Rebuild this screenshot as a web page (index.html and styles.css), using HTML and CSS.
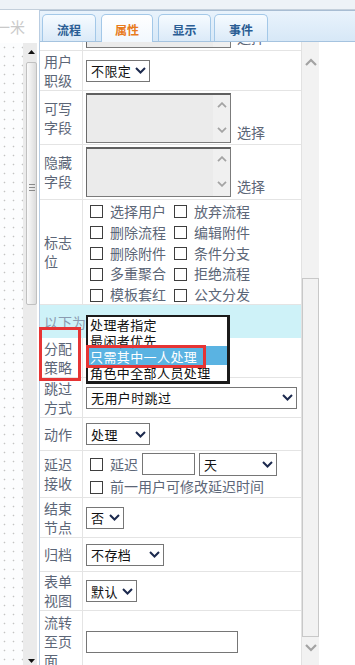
FILE: index.html
```html
<!DOCTYPE html>
<html lang="zh-CN">
<head>
<meta charset="utf-8">
<title>属性</title>
<link rel="stylesheet" href="styles.css">
</head>
<body>
<div class="topstrip"></div>
<div class="main">
  <aside class="leftpane">
    <div class="lp-head"><span class="lp-title">一米</span></div>
    <div class="lp-body">
      <div class="canvas"></div>
      <div class="lscroll">
        <div class="lbtn"><svg width="7" height="4" viewBox="0 0 7 4"><path d="M0 4L3.5 0L7 4Z" fill="#111"/></svg></div>
        <div class="ltrack"><div class="lthumb"><span class="grip"></span></div></div>
        <div class="lbtn lbtn-down"><svg width="7" height="4" viewBox="0 0 7 4"><path d="M0 0L3.5 4L7 0Z" fill="#111"/></svg></div>
      </div>
    </div>
  </aside>

  <section class="panel">
    <nav class="tabs">
      <span class="tab t1">流程</span>
      <span class="tab t2 active">属性</span>
      <span class="tab t3">显示</span>
      <span class="tab t4">事件</span>
    </nav>

    <div class="pbody">
      <div class="viewport">
        <div class="form">

          <div class="row h55 first">
            <div class="lbl">可选用户</div>
            <div class="val">
              <div class="tafield">
                <div class="ta"><div class="ta-bar">
                  <svg width="10" height="6" viewBox="0 0 10 6"><path d="M1 5.2L5 1.2L9 5.2" fill="none" stroke="#a4a4a4" stroke-width="1.8"/></svg>
                  <svg width="10" height="6" viewBox="0 0 10 6"><path d="M1 0.8L5 4.8L9 0.8" fill="none" stroke="#a4a4a4" stroke-width="1.8"/></svg>
                </div></div>
                <span class="pick">选择</span>
              </div>
            </div>
          </div>

          <div class="row h40">
            <div class="lbl">用户职级</div>
            <div class="val">
              <div class="sel w64"><span>不限定</span><svg class="chev" width="11" height="7" viewBox="0 0 11 7"><path d="M1 1L5.5 5.5L10 1" fill="none" stroke="#1c2a4e" stroke-width="2"/></svg></div>
            </div>
          </div>

          <div class="row h54">
            <div class="lbl">可写字段</div>
            <div class="val">
              <div class="tafield">
                <div class="ta"><div class="ta-bar">
                  <svg width="10" height="6" viewBox="0 0 10 6"><path d="M1 5.2L5 1.2L9 5.2" fill="none" stroke="#a4a4a4" stroke-width="1.8"/></svg>
                  <svg width="10" height="6" viewBox="0 0 10 6"><path d="M1 0.8L5 4.8L9 0.8" fill="none" stroke="#a4a4a4" stroke-width="1.8"/></svg>
                </div></div>
                <span class="pick">选择</span>
              </div>
            </div>
          </div>

          <div class="row h55">
            <div class="lbl">隐藏字段</div>
            <div class="val">
              <div class="tafield">
                <div class="ta"><div class="ta-bar">
                  <svg width="10" height="6" viewBox="0 0 10 6"><path d="M1 5.2L5 1.2L9 5.2" fill="none" stroke="#a4a4a4" stroke-width="1.8"/></svg>
                  <svg width="10" height="6" viewBox="0 0 10 6"><path d="M1 0.8L5 4.8L9 0.8" fill="none" stroke="#a4a4a4" stroke-width="1.8"/></svg>
                </div></div>
                <span class="pick">选择</span>
              </div>
            </div>
          </div>

          <div class="row h105">
            <div class="lbl">标志位</div>
            <div class="val">
              <div class="flags">
                <span class="cbi"><span class="cb"></span>选择用户</span>
                <span class="cbi"><span class="cb"></span>放弃流程</span>
                <span class="cbi"><span class="cb"></span>删除流程</span>
                <span class="cbi"><span class="cb"></span>编辑附件</span>
                <span class="cbi"><span class="cb"></span>删除附件</span>
                <span class="cbi"><span class="cb"></span>条件分支</span>
                <span class="cbi"><span class="cb"></span>多重聚合</span>
                <span class="cbi"><span class="cb"></span>拒绝流程</span>
                <span class="cbi"><span class="cb"></span>模板套红</span>
                <span class="cbi"><span class="cb"></span>公文分发</span>
              </div>
            </div>
          </div>

          <div class="section">以下为流转策略设置</div>

          <div class="row h40">
            <div class="lbl">分配策略</div>
            <div class="val"></div>
          </div>

          <div class="row h40">
            <div class="lbl">跳过方式</div>
            <div class="val">
              <div class="sel w211"><span>无用户时跳过</span><svg class="chev" width="11" height="7" viewBox="0 0 11 7"><path d="M1 1L5.5 5.5L10 1" fill="none" stroke="#1c2a4e" stroke-width="2"/></svg></div>
            </div>
          </div>

          <div class="row h33">
            <div class="lbl">动作</div>
            <div class="val">
              <div class="sel w64"><span>处理</span><svg class="chev" width="11" height="7" viewBox="0 0 11 7"><path d="M1 1L5.5 5.5L10 1" fill="none" stroke="#1c2a4e" stroke-width="2"/></svg></div>
            </div>
          </div>

          <div class="row h47">
            <div class="lbl">延迟接收</div>
            <div class="val stack">
              <div class="line1">
                <span class="cbi"><span class="cb"></span>延迟</span>
                <span class="inp w53"></span>
                <div class="sel w78 tall"><span>天</span><svg class="chev" width="11" height="7" viewBox="0 0 11 7"><path d="M1 1L5.5 5.5L10 1" fill="none" stroke="#1c2a4e" stroke-width="2"/></svg></div>
              </div>
              <div class="line2">
                <span class="cbi"><span class="cb"></span>前一用户可修改延迟时间</span>
              </div>
            </div>
          </div>

          <div class="row h40">
            <div class="lbl">结束节点</div>
            <div class="val">
              <div class="sel w38"><span>否</span><svg class="chev" width="11" height="7" viewBox="0 0 11 7"><path d="M1 1L5.5 5.5L10 1" fill="none" stroke="#1c2a4e" stroke-width="2"/></svg></div>
            </div>
          </div>

          <div class="row h34">
            <div class="lbl">归档</div>
            <div class="val">
              <div class="sel w78"><span>不存档</span><svg class="chev" width="11" height="7" viewBox="0 0 11 7"><path d="M1 1L5.5 5.5L10 1" fill="none" stroke="#1c2a4e" stroke-width="2"/></svg></div>
            </div>
          </div>

          <div class="row h39">
            <div class="lbl">表单视图</div>
            <div class="val">
              <div class="sel w51"><span>默认</span><svg class="chev" width="11" height="7" viewBox="0 0 11 7"><path d="M1 1L5.5 5.5L10 1" fill="none" stroke="#1c2a4e" stroke-width="2"/></svg></div>
            </div>
          </div>

          <div class="row h62">
            <div class="lbl">流转至页面</div>
            <div class="val">
              <span class="inp w152"></span>
            </div>
          </div>

        </div>
      </div>

      <div class="rscroll">
        <div class="rs-up"><svg width="12" height="8" viewBox="0 0 12 8"><path d="M1 7L6 2L11 7" fill="none" stroke="#a3a3a3" stroke-width="2.2"/></svg></div>
        <div class="rs-track"><div class="rs-thumb"></div></div>
        <div class="rs-down"><svg width="12" height="8" viewBox="0 0 12 8"><path d="M1 1L6 6L11 1" fill="none" stroke="#a3a3a3" stroke-width="2.2"/></svg></div>
      </div>
    </div>

    <div class="listbox">
      <div class="opt">处理者指定</div>
      <div class="opt">最闲者优先</div>
      <div class="opt on">只需其中一人处理</div>
      <div class="opt">角色中全部人员处理</div>
    </div>
    <div class="mark mark-label"></div>
    <div class="mark mark-item"></div>
  </section>
</div>
</body>
</html>
```

FILE: styles.css
```css
* { box-sizing: border-box; }
html, body { margin: 0; padding: 0; }
body {
  width: 355px;
  height: 665px;
  overflow: hidden;
  background: #fff;
  font-family: "Noto Sans CJK SC", "Noto Sans", sans-serif;
}

.topstrip {
  height: 10px;
  background: #eef2f7;
  border-bottom: 1px solid #c4cfdb;
}

.main {
  display: flex;
  height: 655px;
}

/* ---------- left pane ---------- */
.leftpane {
  width: 39px;
  flex: none;
  display: flex;
  flex-direction: column;
}
.lp-head {
  height: 33px;
  display: flex;
  justify-content: flex-end;
  align-items: center;
  padding-right: 14px;
  overflow: hidden;
  font-size: 15px;
  line-height: 1;
  color: #c9c9c9;
  white-space: nowrap;
}
.lp-title { flex: none; }
.lp-body {
  flex: 1;
  display: flex;
  padding-right: 2px;
}
.canvas {
  width: 23px;
  background-color: #fcfdfe;
  background-image: radial-gradient(circle, #c3c3c3 0.7px, transparent 1.1px);
  background-size: 9px 9px;
  background-position: 0 0;
}
.lscroll {
  width: 14px;
  display: flex;
  flex-direction: column;
  background: #ebebeb;
}
.lbtn {
  height: 17px;
  display: flex;
  align-items: center;
  justify-content: center;
  padding-left: 2px;
}
.lbtn-down { align-items: flex-end; padding-bottom: 2px; }
.ltrack {
  flex: 1;
  padding: 2px 0 0 3px;
}
.lthumb {
  height: 243px;
  border: 1px solid #c0c0c0;
  border-radius: 2px;
  background: linear-gradient(90deg, #fbfbfb, #dcdcdc);
  display: flex;
  align-items: center;
  justify-content: center;
}
.grip {
  width: 6px;
  height: 7px;
  margin-top: 8px;
  background: repeating-linear-gradient(#8a8a8a 0 1px, transparent 1px 3px);
}

/* ---------- panel ---------- */
.panel {
  flex: 1;
  position: relative;
  display: flex;
  flex-direction: column;
  border-left: 1px solid #b9cde2;
  min-width: 0;
}
.tabs {
  height: 32px;
  flex: none;
  display: flex;
  align-items: flex-end;
  gap: 5px;
  padding-left: 2px;
  border-top: 1px solid #a8bdd3;
  border-bottom: 1px solid #a5c3df;
  background: linear-gradient(#e9f3fc, #d7e8f7);
}
.tab {
  height: 27px;
  display: flex;
  align-items: center;
  justify-content: center;
  padding-top: 2px;
  border: 1px solid #a3c8e8;
  border-bottom: 0;
  border-radius: 5px 5px 0 0;
  background: linear-gradient(#f6fbff, #dbeaf8);
  font-size: 12px;
  font-weight: bold;
  color: #2a5d94;
}
.t1 { width: 54px; }
.t2 { width: 52px; }
.t3 { width: 53px; }
.t4 { width: 54px; margin-left: -2px; }
.tab.active {
  height: 28px;
  margin-bottom: -1px;
  background: linear-gradient(#ffffff, #f2f8fe);
  color: #e87b1c;
}

.pbody {
  flex: 1;
  display: flex;
  min-height: 0;
}
.viewport {
  width: 262px;
  flex: none;
  overflow: hidden;
  border-right: 1px solid #e2e2e2;
}

/* ---------- rows ---------- */
.row {
  display: flex;
  border-bottom: 1px solid #e4e4e4;
}
.first { margin-top: -46px; }
.h33 { height: 33px; }
.h34 { height: 34px; }
.h39 { height: 39px; }
.h40 { height: 40px; }
.h47 { height: 47px; }
.h54 { height: 54px; }
.h55 { height: 55px; }
.h62 { height: 62px; }
.h105 { height: 105px; }

.lbl {
  width: 43px;
  flex: none;
  display: flex;
  align-items: center;
  padding-left: 4px;
  border-right: 1px solid #e4e4e4;
  font-size: 14px;
  line-height: 19px;
  color: #5c6677;
}
.val {
  flex: 1;
  min-width: 0;
  display: flex;
  align-items: center;
  padding-left: 3px;
}

.section {
  height: 33px;
  display: flex;
  align-items: center;
  padding-left: 4px;
  background: #cef2f8;
  font-size: 14px;
  color: #8b9bb0;
  white-space: nowrap;
}

/* select */
.sel {
  height: 22px;
  display: inline-flex;
  align-items: center;
  justify-content: space-between;
  padding: 0 3px 0 4px;
  border: 1px solid #767676;
  background: #fff;
  font-size: 13px;
  letter-spacing: 0.4px;
  color: #111;
  line-height: 1;
  flex: none;
}
.sel.tall { height: 23px; }
.chev { flex: none; }
.w38 { width: 38px; }
.w51 { width: 51px; }
.w53 { width: 53px; }
.w64 { width: 64px; }
.w78 { width: 78px; }
.w152 { width: 152px; }
.w211 { width: 211px; }

.inp {
  display: inline-block;
  height: 22px;
  border: 1px solid #767676;
  background: #fff;
  flex: none;
}

/* textarea */
.tafield {
  display: flex;
  align-items: flex-end;
}
.ta {
  width: 145px;
  height: 50px;
  display: flex;
  justify-content: flex-end;
  border: 1px solid #7b7b7b;
  border-top: 2px solid #606060;
  border-left-color: #6a6a6a;
  background: #ebebeb;
}
.ta-bar {
  width: 17px;
  display: flex;
  flex-direction: column;
  justify-content: space-between;
  align-items: center;
  padding: 7px 0 9px;
  background: #f0f0f0;
}
.pick {
  margin: 0 0 1px 6px;
  font-size: 14px;
  line-height: 19px;
  color: #5c6677;
}

/* checkboxes */
.flags {
  display: grid;
  grid-template-columns: 84px 84px;
  grid-auto-rows: 20.8px;
  padding-top: 2px;
}
.cbi {
  display: flex;
  align-items: center;
  font-size: 14px;
  line-height: 19px;
  color: #5c6677;
  white-space: nowrap;
}
.cb {
  width: 13px;
  height: 13px;
  flex: none;
  margin: 1px 7px 0 4px;
  border: 1px solid #3e3e3e;
  background: #fff;
}

.stack {
  flex-direction: column;
  align-items: flex-start;
  justify-content: flex-start;
  padding-top: 1px;
}
.line1 {
  height: 24px;
  display: flex;
  align-items: center;
}
.line1 .inp { margin-left: 4px; }
.line1 .sel { margin-left: 4px; }
.line2 {
  height: 21px;
  display: flex;
  align-items: center;
}

/* right scrollbar */
.rscroll {
  width: 17px;
  flex: none;
  display: flex;
  flex-direction: column;
  background: #f2f2f2;
}
.rs-up {
  height: 40px;
  display: flex;
  justify-content: center;
  padding-top: 16px;
}
.rs-track { flex: 1; }
.rs-thumb {
  margin-top: 196px;
  height: 359px;
  border: 1px solid #c8c8c8;
  background: #f2f2f2;
}
.rs-down {
  height: 28px;
  display: flex;
  justify-content: center;
  padding-top: 7px;
}

/* open dropdown overlay */
.listbox {
  position: absolute;
  left: 46px;
  top: 305px;
  width: 144px;
  height: 69px;
  overflow: hidden;
  border: 2px solid #1b1b1b;
  border-right-width: 3px;
  border-bottom-width: 3px;
  background: #fff;
  font-size: 13px;
  letter-spacing: 0.4px;
  line-height: 16px;
  color: #111;
}
.opt {
  padding-left: 2px;
  white-space: nowrap;
}
.opt.on {
  margin-top: -3px;
  padding-top: 3px;
  background: #5ab3e2;
  color: #fff;
}

/* red annotation boxes */
.mark {
  position: absolute;
  border: 3px solid #e63434;
  pointer-events: none;
}
.mark-label {
  left: -1px;
  top: 317px;
  width: 42px;
  height: 54px;
}
.mark-item {
  left: 46px;
  top: 335px;
  width: 120px;
  height: 23px;
}
```
